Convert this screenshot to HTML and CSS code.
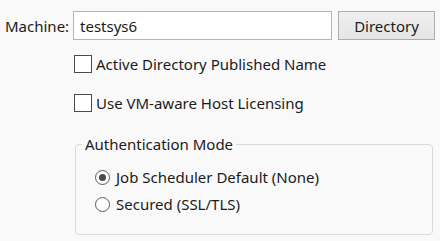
FILE: index.html
```html
<!DOCTYPE html>
<html>
<head>
<meta charset="utf-8">
<link rel="stylesheet" href="styles.css">
</head>
<body>
<div class="panel">
  <div class="machine-row">
    <label class="label">Machine:</label>
    <div class="textbox">testsys6</div>
    <button class="btn">Directory</button>
  </div>
  <div class="check-row first">
    <span class="checkbox"></span>
    <span class="text">Active Directory Published Name</span>
  </div>
  <div class="check-row second">
    <span class="checkbox"></span>
    <span class="text">Use VM-aware Host Licensing</span>
  </div>
  <fieldset class="group">
    <legend class="legend">Authentication Mode</legend>
    <div class="radio-row">
      <span class="radio checked"><span class="dot"></span></span>
      <span class="text">Job Scheduler Default (None)</span>
    </div>
    <div class="radio-row">
      <span class="radio"></span>
      <span class="text">Secured (SSL/TLS)</span>
    </div>
  </fieldset>
</div>
</body>
</html>
```
FILE: styles.css
```css
html, body {
  margin: 0;
  padding: 0;
  background: #f9f9f9;
}
body {
  width: 440px;
  height: 241px;
  overflow: hidden;
  font-family: "Noto Sans", "Open Sans", sans-serif;
  font-size: 15px;
  color: #1b1b1b;
}
.panel {
  padding-top: 11px;
}
.machine-row {
  display: flex;
  align-items: center;
  height: 29px;
}
.label {
  padding-left: 5px;
  box-sizing: border-box;
  width: 73px;
}
.textbox {
  width: 259px;
  height: 29px;
  box-sizing: border-box;
  border: 1px solid #b5b5b5;
  background: #fff;
  padding-left: 6px;
  display: flex;
  align-items: center;
}
.btn {
  margin-left: 6px;
  width: 97px;
  height: 29px;
  box-sizing: border-box;
  border: 1px solid #adadad;
  background: linear-gradient(#f0f0f0, #e5e5e5);
  font: inherit;
  color: inherit;
  padding: 0;
}
.check-row {
  display: flex;
  align-items: center;
  margin-left: 74px;
  height: 18px;
}
.check-row.first { margin-top: 15px; }
.check-row.second { margin-top: 21px; }
.checkbox {
  width: 18px;
  height: 18px;
  box-sizing: border-box;
  border: 1px solid #4a4a4a;
  background: #fff;
  margin-right: 4px;
}
.group {
  margin: 22px 0 0 75px;
  width: 358px;
  height: 101px;
  box-sizing: border-box;
  border: 1px solid #d9d9d9;
  border-radius: 4px;
  padding: 15px 0 0 19px;
}
.legend {
  padding: 0 3px;
  margin-left: -13px;
}
.radio-row {
  display: flex;
  align-items: center;
  height: 16px;
  margin-bottom: 11px;
}
.radio {
  width: 15px;
  height: 15px;
  box-sizing: border-box;
  border: 1px solid #5a5a5a;
  border-radius: 50%;
  background: #fff;
  margin-right: 6px;
  display: flex;
  align-items: center;
  justify-content: center;
}
.radio .dot {
  width: 7px;
  height: 7px;
  border-radius: 50%;
  background: #4a4a4a;
}
```
